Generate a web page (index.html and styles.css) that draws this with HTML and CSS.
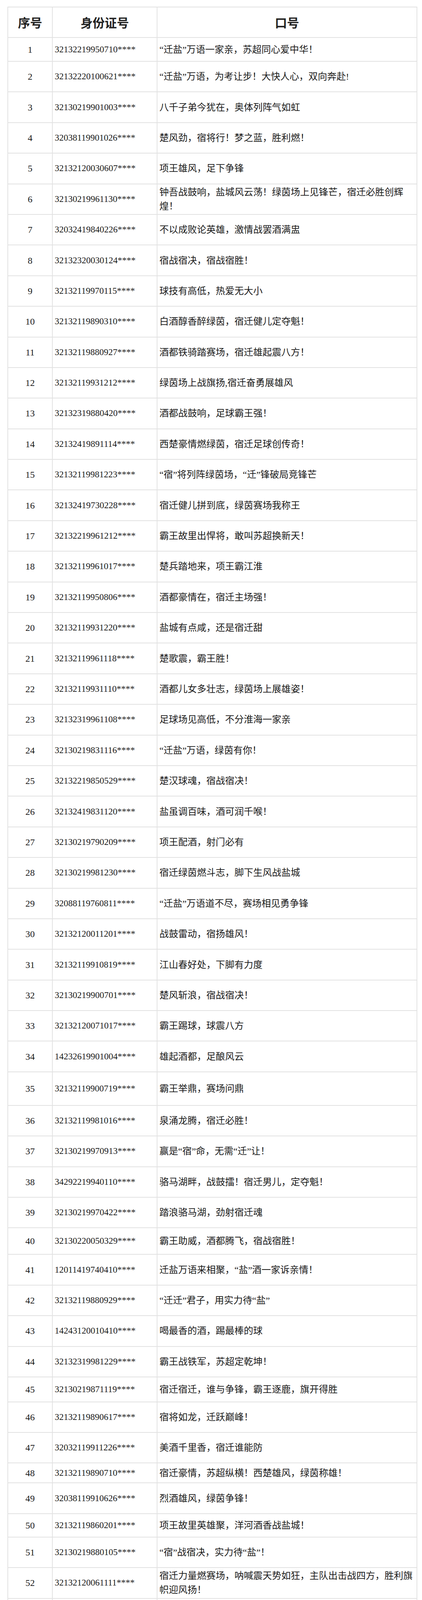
FILE: index.html
```html
<!DOCTYPE html>
<html lang="zh-CN">
<head>
<meta charset="utf-8">
<title>口号征集</title>
<link rel="stylesheet" href="styles.css">
</head>
<body>
<table class="sheet">
<colgroup><col class="c-no"><col class="c-id"><col class="c-txt"></colgroup>
<thead>
<tr class="head"><th>序号</th><th>身份证号</th><th>口号</th></tr>
</thead>
<tbody>
<tr class="h60"><td class="no">1</td><td class="id">32132219950710****</td><td>“迁盐”万语一家亲，苏超同心爱中华！</td></tr>
<tr><td class="no">2</td><td class="id">32132220100621****</td><td>“迁盐”万语，为考让步！大快人心，双向奔赴!</td></tr>
<tr><td class="no">3</td><td class="id">32130219901003****</td><td>八千子弟今犹在，奥体列阵气如虹</td></tr>
<tr><td class="no">4</td><td class="id">32038119901026****</td><td>楚风劲，宿将行！梦之蓝，胜利燃！</td></tr>
<tr><td class="no">5</td><td class="id">32132120030607****</td><td>项王雄风，足下争锋</td></tr>
<tr><td class="no">6</td><td class="id">32130219961130****</td><td>钟吾战鼓响，盐城风云荡！绿茵场上见锋芒，宿迁必胜创辉煌！</td></tr>
<tr><td class="no">7</td><td class="id">32032419840226****</td><td>不以成败论英雄，激情战罢酒满盅</td></tr>
<tr><td class="no">8</td><td class="id">32132320030124****</td><td>宿战宿决，宿战宿胜！</td></tr>
<tr><td class="no">9</td><td class="id">32132119970115****</td><td>球技有高低，热爱无大小</td></tr>
<tr><td class="no">10</td><td class="id">32132119890310****</td><td>白酒醇香醉绿茵，宿迁健儿定夺魁！</td></tr>
<tr><td class="no">11</td><td class="id">32132119880927****</td><td>酒都铁骑踏赛场，宿迁雄起震八方！</td></tr>
<tr><td class="no">12</td><td class="id">32132119931212****</td><td>绿茵场上战旗扬,宿迁奋勇展雄风</td></tr>
<tr><td class="no">13</td><td class="id">32132319880420****</td><td>酒都战鼓响，足球霸王强！</td></tr>
<tr><td class="no">14</td><td class="id">32132419891114****</td><td>西楚豪情燃绿茵，宿迁足球创传奇！</td></tr>
<tr><td class="no">15</td><td class="id">32132119981223****</td><td>“宿”将列阵绿茵场，“迁”锋破局竞锋芒</td></tr>
<tr><td class="no">16</td><td class="id">32132419730228****</td><td>宿迁健儿拼到底，绿茵赛场我称王</td></tr>
<tr><td class="no">17</td><td class="id">32132219961212****</td><td>霸王故里出悍将，敢叫苏超换新天！</td></tr>
<tr><td class="no">18</td><td class="id">32132119961017****</td><td>楚兵踏地来，项王霸江淮</td></tr>
<tr><td class="no">19</td><td class="id">32132119950806****</td><td>酒都豪情在，宿迁主场强！</td></tr>
<tr><td class="no">20</td><td class="id">32132119931220****</td><td>盐城有点咸，还是宿迁甜</td></tr>
<tr><td class="no">21</td><td class="id">32132119961118****</td><td>楚歌震，霸王胜！</td></tr>
<tr><td class="no">22</td><td class="id">32132119931110****</td><td>酒都儿女多壮志，绿茵场上展雄姿！</td></tr>
<tr><td class="no">23</td><td class="id">32132319961108****</td><td>足球场见高低，不分淮海一家亲</td></tr>
<tr><td class="no">24</td><td class="id">32130219831116****</td><td>“迁盐”万语，绿茵有你！</td></tr>
<tr><td class="no">25</td><td class="id">32132219850529****</td><td>楚汉球魂，宿战宿决！</td></tr>
<tr><td class="no">26</td><td class="id">32132419831120****</td><td>盐虽调百味，酒可润千喉！</td></tr>
<tr><td class="no">27</td><td class="id">32130219790209****</td><td>项王配酒，射门必有</td></tr>
<tr><td class="no">28</td><td class="id">32130219981230****</td><td>宿迁绿茵燃斗志，脚下生风战盐城</td></tr>
<tr><td class="no">29</td><td class="id">32088119760811****</td><td>“迁盐”万语道不尽，赛场相见勇争锋</td></tr>
<tr><td class="no">30</td><td class="id">32132120011201****</td><td>战鼓雷动，宿扬雄风！</td></tr>
<tr><td class="no">31</td><td class="id">32132119910819****</td><td>江山春好处，下脚有力度</td></tr>
<tr><td class="no">32</td><td class="id">32130219900701****</td><td>楚风斩浪，宿战宿决！</td></tr>
<tr><td class="no">33</td><td class="id">32132120071017****</td><td>霸王踢球，球震八方</td></tr>
<tr><td class="no">34</td><td class="id">14232619901004****</td><td>雄起酒都，足酿风云</td></tr>
<tr class="h86"><td class="no">35</td><td class="id">32132119900719****</td><td>霸王举鼎，赛场问鼎</td></tr>
<tr><td class="no">36</td><td class="id">32132119981016****</td><td>泉涌龙腾，宿迁必胜！</td></tr>
<tr><td class="no">37</td><td class="id">32130219970913****</td><td>赢是“宿”命，无需“迁”让！</td></tr>
<tr><td class="no">38</td><td class="id">34292219940110****</td><td>骆马湖畔，战鼓擂！宿迁男儿，定夺魁！</td></tr>
<tr><td class="no">39</td><td class="id">32130219970422****</td><td>踏浪骆马湖，劲射宿迁魂</td></tr>
<tr class="h68"><td class="no">40</td><td class="id">32130220050329****</td><td>霸王助威，酒都腾飞，宿战宿胜！</td></tr>
<tr><td class="no">41</td><td class="id">12011419740410****</td><td>迁盐万语来相聚，“盐”酒一家诉亲情！</td></tr>
<tr><td class="no">42</td><td class="id">32132119880929****</td><td>“迁迁”君子，用实力待“盐”</td></tr>
<tr><td class="no">43</td><td class="id">14243120010410****</td><td>喝最香的酒，踢最棒的球</td></tr>
<tr><td class="no">44</td><td class="id">32132319981229****</td><td>霸王战铁军，苏超定乾坤！</td></tr>
<tr class="h64"><td class="no">45</td><td class="id">32130219871119****</td><td>宿迁宿迁，谁与争锋，霸王逐鹿，旗开得胜</td></tr>
<tr><td class="no">46</td><td class="id">32132119890617****</td><td>宿将如龙，迁跃巅峰！</td></tr>
<tr><td class="no">47</td><td class="id">32032119911226****</td><td>美酒千里香，宿迁谁能防</td></tr>
<tr class="h51"><td class="no">48</td><td class="id">32132119890710****</td><td>宿迁豪情，苏超纵横！西楚雄风，绿茵称雄！</td></tr>
<tr><td class="no">49</td><td class="id">32038119910626****</td><td>烈酒雄风，绿茵争锋！</td></tr>
<tr class="h60b"><td class="no">50</td><td class="id">32132119860201****</td><td>项王故里英雄聚，洋河酒香战盐城！</td></tr>
<tr><td class="no">51</td><td class="id">32130219880105****</td><td>“宿”战宿决，实力待“盐”！</td></tr>
<tr><td class="no">52</td><td class="id">32132120061111****</td><td>宿迁力量燃赛场，呐喊震天势如狂，主队出击战四方，胜利旗帜迎风扬！</td></tr>
<tr class="h60"><td class="no">53</td><td class="id">32038219991104****</td><td>酒香燃斗志，足下展雄风</td></tr>
<tr><td class="no">54</td><td class="id">63010419870506****</td><td>“宿”来有实力，走在最“迁”“盐”</td></tr>
<tr><td class="no">55</td><td class="id">34118119880926****</td><td>楚韵雄风，横扫绿茵。</td></tr>
<tr><td class="no">56</td><td class="id">32132219980509****</td><td>项王故里闯新程，宿迁战将扬威名！</td></tr>
<tr><td class="no">57</td><td class="id">32132119980105****</td><td>双城逐鹿，绿茵共荣</td></tr>
<tr><td class="no">58</td><td class="id">32132120000209****</td><td>霸王举鼎，力震山河！</td></tr>
<tr><td class="no">59</td><td class="id">32132319881211****</td><td>宿迁对盐城，一战定乾坤</td></tr>
<tr><td class="no">60</td><td class="id">32132320160711****</td><td>宿迁战鼓震九天，盐城勇士破风来！</td></tr>
<tr><td class="no">61</td><td class="id">32132219960324****</td><td>霸王血脉酒都魂！骆马湖啸战盐城！</td></tr>
<tr><td class="no">62</td><td class="id">32032419960824****</td><td>项王精神在，宿迁勇夺冠！</td></tr>
<tr><td class="no">63</td><td class="id">32130219870210****</td><td>酒都火力，所向披靡！</td></tr>
<tr><td class="no">64</td><td class="id">32130220160311****</td><td>“迁”马奔腾，战无不胜！</td></tr>
<tr><td class="no">65</td><td class="id">32132119850617****</td><td>西楚雄风，横扫绿茵，迁迁加油！</td></tr>
<tr><td class="no">66</td><td class="id">32130120141030****</td><td>宿战速决，战无不胜，迁迁必胜！</td></tr>
<tr><td class="no">67</td><td class="id">32130219800201****</td><td>楚风战海韵，绿茵决雌雄！</td></tr>
<tr><td class="no">68</td><td class="id">32130220130802****</td><td>盐宿一脉连，胜负皆豪情！</td></tr>
<tr><td class="no">69</td><td class="id">32132419751226****</td><td>场上争胜负，场下共“盐”“迁”！</td></tr>
<tr><td class="no">70</td><td class="id">32088119790708****</td><td>“迁盐”携手一家亲，苏北同心创辉煌！</td></tr>
<tr><td class="no">71</td><td class="id">32130219780706****</td><td>宿迁主场，气势如虹；盐城来战，勇者无惧！</td></tr>
<tr><td class="no">72</td><td class="id">32132419890120****</td><td>“宿”写苏超，“盐”铸传奇！</td></tr>
<tr><td class="no">73</td><td class="id">32030319791110****</td><td>项王雄风今犹在，绿茵场上展豪迈！</td></tr>
<tr><td class="no">74</td><td class="id">32130220070529****</td><td>骆马湖涌千帆竞，宿迁健儿势如虹！</td></tr>
<tr><td class="no">75</td><td class="id">32082719821109****</td><td>敬盐城一杯酒，赛场相逢皆战友！</td></tr>
<tr><td class="no">76</td><td class="id">32132420090330****</td><td>盐城且听楚风啸，宿迁酒香战旗飘</td></tr>
<tr><td class="no">77</td><td class="id">32132219860512****</td><td>盐城锋芒又如何？宿迁酒香镇山河</td></tr>
<tr><td class="no">78</td><td class="id">32081919681125****</td><td>“宿”写传奇，“盐”续辉煌！</td></tr>
<tr><td class="no">79</td><td class="id">32081919671209****</td><td class="muted">宿迁战旗扬，盐城斗志昂！</td></tr>
<tr><td class="no">80</td><td class="id">32082519801102****</td><td>骆马湖浪涌，宿迁队必胜！</td></tr>
<tr><td class="no">81</td><td class="id">32132319850123****</td><td>楚风汉韵，绿茵必胜！</td></tr>
<tr><td class="no">82</td><td class="id">32132120110330****</td><td>“宿”梦成真，“盐”续精彩！</td></tr>
<tr><td class="no">83</td><td class="id">32082619850313****</td><td>兵临“城”下，可“盐”可甜；“宿”愿得偿，“迁”场“迁”胜</td></tr>
<tr><td class="no">84</td><td class="id">32130220160307****</td><td>项王擎旗酒助威，绿茵逐梦振雄风！</td></tr>
<tr><td class="no">85</td><td class="id">32091119830102****</td><td>用一场最霸气的球，刻画一生最难忘的温柔。</td></tr>
<tr><td class="no">86</td><td class="id">32092309810329****</td><td>终极一战，是你我的“宿”命；奥体一面，是你我的“迁”绊</td></tr>
<tr><td class="no">87</td><td class="id">32130220051204****</td><td>骆马湖大纵湖同波，霸王蟹小麋鹿共舞</td></tr>
<tr><td class="no">88</td><td class="id">32130219890307****</td><td>酒都醉倒盐阜客，楚歌笑纳三分归。</td></tr>
<tr><td class="no">89</td><td class="id">32132119891023****</td><td>项王故里震四方，鹤鹿之乡也难挡</td></tr>
<tr><td class="no">90</td><td class="id">32130220161004****</td><td>项王精神今犹在，宿迁足球永不败</td></tr>
<tr><td class="no">91</td><td class="id">32081919721206****</td><td>宿迁主场，火力全开；盐城挑战，激情不灭！</td></tr>
<tr><td class="no">92</td><td class="id">32132319920125****</td><td>西楚子弟齐昂首，绿茵争锋不低头！</td></tr>
<tr><td class="no">93</td><td class="id">32132419940925****</td><td>宿迁绿茵场，盐城斗志扬</td></tr>
<tr><td class="no">94</td><td class="id">32068419821201****</td><td>宿迁主场，气势如虹。盐城挑战，勇者无畏！</td></tr>
<tr><td class="no">95</td><td class="id">32081919750918****</td><td>浸霸气，润酒魂，宿迁必胜！</td></tr>
<tr><td class="no">96</td><td class="id">32130219990605****</td><td>运河奔涌，霸王气概！盐城来战，定显风采！</td></tr>
<tr><td class="no">97</td><td class="id">32130219961026****</td><td>霸王雄心燃绿茵，宿迁主场定乾坤！</td></tr>
<tr><td class="no">98</td><td class="id">32132219940125****</td><td>西楚豪情在，足下见真章！</td></tr>
<tr><td class="no">99</td><td class="id">32132219910718****</td><td>热血澎湃楚风狂，宿迁足球斗志昂！</td></tr>
<tr><td class="no">100</td><td class="id">32132119980802****</td><td>湿地双城绿茵会，宿迁美酒敬胜归！</td></tr>
</tbody>
</table>
</body>
</html>
```

FILE: styles.css
```css
html, body {
  margin: 0;
  padding: 0;
  background: #ffffff;
}

.sheet {
  border-collapse: collapse;
  table-layout: fixed;
  width: 1047px;
  margin: 17px 0 0 19px;
  font-family: "Liberation Serif", "Noto Sans CJK SC", serif;
  font-size: 24px;
  color: #1a1a1a;
}

.c-no { width: 114px; }
.c-id { width: 268px; }
.c-txt { width: 665px; }

.sheet th,
.sheet td {
  border: 2px solid #e2e2e2;
  padding: 0 5px;
  line-height: 36px;
  vertical-align: middle;
  text-align: left;
}

.sheet tr { height: 78.4px; }

.sheet th {
  font-family: "Noto Sans CJK SC", sans-serif;
  font-size: 31px;
  font-weight: 700;
  color: #222222;
  text-align: center;
}

.sheet td.no { text-align: center; }
.sheet td.id { font-size: 23px; }
.sheet td.muted { color: #555555; }

.sheet tr.h60 { height: 60.6px; }
.sheet tr.h60b { height: 60px; }
.sheet tr.h86 { height: 86px; }
.sheet tr.h68 { height: 68px; }
.sheet tr.h64 { height: 63.6px; }
.sheet tr.h51 { height: 51px; }
```
